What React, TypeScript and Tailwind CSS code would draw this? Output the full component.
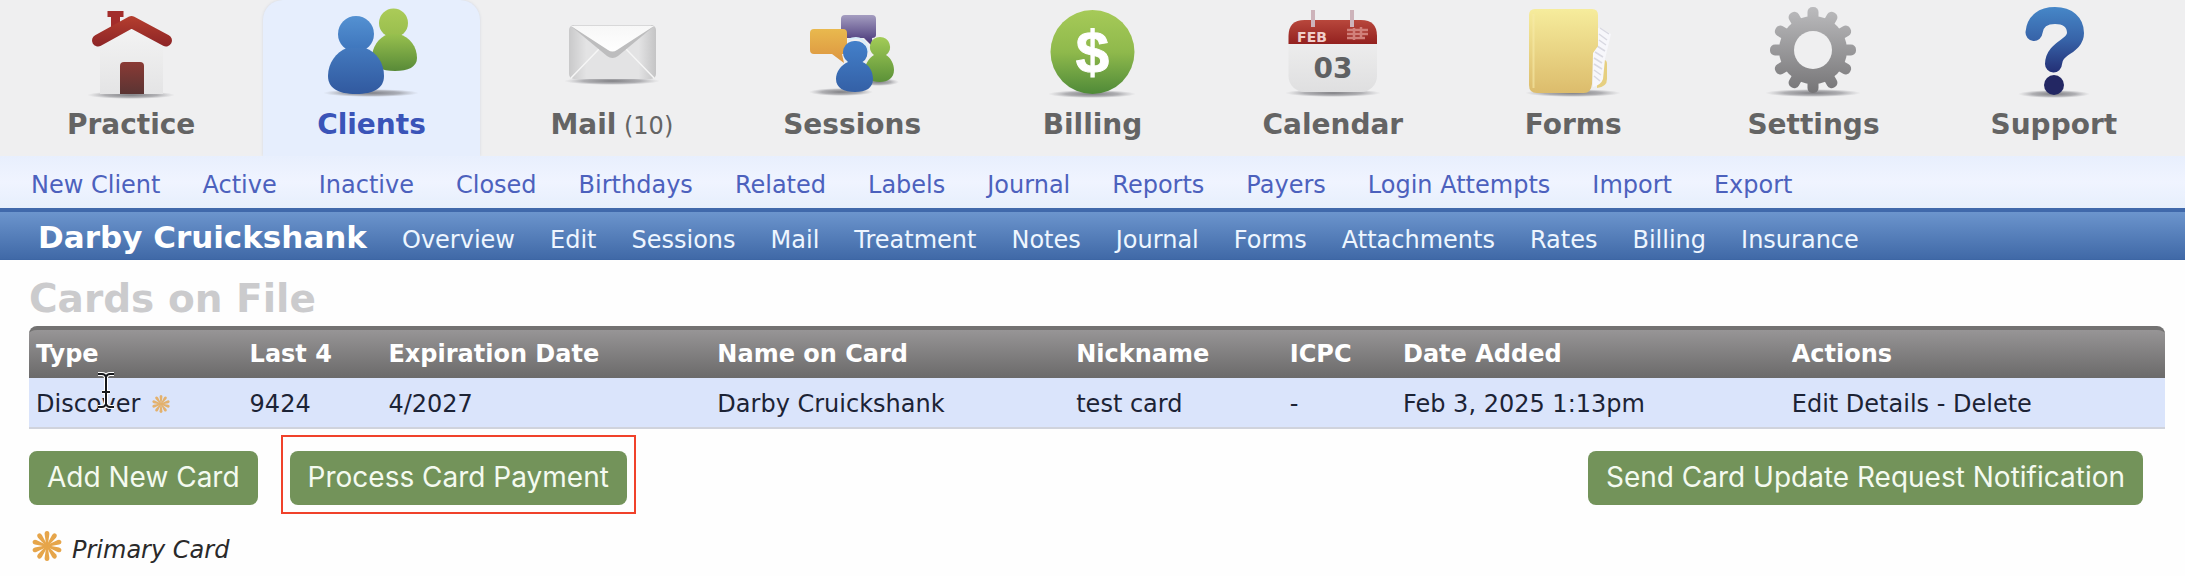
import type { ReactNode } from 'react'

const mainTabs = [
  { label: 'Practice', icon: <PracticeIcon /> },
  { label: 'Clients', icon: <ClientsIcon />, active: true },
  { label: 'Mail', icon: <MailIcon />, count: 10 },
  { label: 'Sessions', icon: <SessionsIcon /> },
  { label: 'Billing', icon: <BillingIcon /> },
  { label: 'Calendar', icon: <CalendarIcon /> },
  { label: 'Forms', icon: <FormsIcon /> },
  { label: 'Settings', icon: <SettingsIcon /> },
  { label: 'Support', icon: <SupportIcon /> },
]

const clientLinks = [
  'New Client',
  'Active',
  'Inactive',
  'Closed',
  'Birthdays',
  'Related',
  'Labels',
  'Journal',
  'Reports',
  'Payers',
  'Login Attempts',
  'Import',
  'Export',
]

const recordLinks = [
  'Overview',
  'Edit',
  'Sessions',
  'Mail',
  'Treatment',
  'Notes',
  'Journal',
  'Forms',
  'Attachments',
  'Rates',
  'Billing',
  'Insurance',
]

const columns = [
  { label: 'Type', width: 'w-[10%]' },
  { label: 'Last 4', width: 'w-[6.5%]' },
  { label: 'Expiration Date', width: 'w-[15.4%]' },
  { label: 'Name on Card', width: 'w-[16.8%]' },
  { label: 'Nickname', width: 'w-[10%]' },
  { label: 'ICPC', width: 'w-[5.3%]' },
  { label: 'Date Added', width: 'w-[18.2%]' },
  { label: 'Actions', width: '' },
]

const cards = [
  {
    type: 'Discover',
    primary: true,
    last4: '9424',
    expires: '4/2027',
    name: 'Darby Cruickshank',
    nickname: 'test card',
    icpc: '-',
    added: 'Feb 3, 2025 1:13pm',
  },
]

function Gradient({ id, from, to }: { id: string; from: string; to: string }) {
  return (
    <linearGradient id={id} x1="0" y1="0" x2="0" y2="1">
      <stop offset="0" stopColor={from} />
      <stop offset="1" stopColor={to} />
    </linearGradient>
  )
}

function TabIcon({ children }: { children: ReactNode }) {
  return (
    <svg viewBox="0 0 100 100" className="size-[100px]" aria-hidden="true">
      {children}
    </svg>
  )
}

function Shadow({ id, cx = 50, cy = 94, rx = 48 }: { id: string; cx?: number; cy?: number; rx?: number }) {
  return (
    <>
      <radialGradient id={id}>
        <stop offset="0" stopColor="#6b6b70" stopOpacity="0.85" />
        <stop offset="0.6" stopColor="#85858a" stopOpacity="0.6" />
        <stop offset="1" stopColor="#a0a0a5" stopOpacity="0" />
      </radialGradient>
      <ellipse cx={cx} cy={cy} rx={rx} ry="4" fill={`url(#${id})`} />
    </>
  )
}

function PracticeIcon() {
  return (
    <TabIcon>
      <Gradient id="wall" from="#f4f4f4" to="#e4e4e5" />
      <Gradient id="door" from="#8a3a35" to="#5a3433" />
      <linearGradient id="roof" gradientUnits="userSpaceOnUse" x1="0" y1="14" x2="0" y2="47">
        <stop offset="0" stopColor="#b8402f" />
        <stop offset="1" stopColor="#8c2426" />
      </linearGradient>
      <Shadow id="practice-shadow" cy={95} rx={44} />
      <path d="M19 40 51 23 82 40V94H19z" fill="url(#wall)" />
      <path d="M39 94V66q0-4 4-4h16q4 0 4 4v28z" fill="url(#door)" />
      <path d="M26.500 11h16v6H39v14h-9V17h-3.500z" fill="#a32d2b" />
      <path d="M17 40.500 50.500 22 85 40.500" fill="none" stroke="url(#roof)" strokeWidth="12" strokeLinecap="round" strokeLinejoin="round" />
    </TabIcon>
  )
}

function ClientsIcon() {
  return (
    <TabIcon>
      <Gradient id="client-blue-head" from="#5491d2" to="#3d74bb" />
      <Gradient id="client-blue-body" from="#4379be" to="#31599f" />
      <Gradient id="client-green-head" from="#abcb58" to="#98bd4d" />
      <Gradient id="client-green-body" from="#98c04e" to="#588a38" />
      <Shadow id="clients-shadow" cy={93} />
      <circle cx="72.500" cy="23" r="14.500" fill="url(#client-green-head)" />
      <path d="M67 34h11c11 3 18 13 18 24 0 9-9 13-22 13S51 67 51 58c0-11 6-20 16-24z" fill="url(#client-green-body)" />
      <circle cx="35" cy="34" r="18" fill="url(#client-blue-head)" />
      <path d="M26 48h18c12 4 19 15 19 28 0 12-10 18-28 18S7 88 7 76c0-13 8-24 19-28z" fill="url(#client-blue-body)" />
    </TabIcon>
  )
}

function MailIcon() {
  return (
    <TabIcon>
      <linearGradient id="envelope">
        <stop offset="0" stopColor="#c9c9ca" />
        <stop offset="0.2" stopColor="#e3e3e4" />
        <stop offset="0.8" stopColor="#e3e3e4" />
        <stop offset="1" stopColor="#c4c4c5" />
      </linearGradient>
      <Gradient id="flap" from="#f7f7f7" to="#ffffff" />
      <Shadow id="mail-shadow" cy={81} />
      <rect x="7" y="25" width="87" height="54" rx="5" fill="url(#envelope)" />
      <path d="M9 78 37 49M92 78 64 49" stroke="#f6f6f6" strokeWidth="1.500" />
      <path d="M10 27 45 56q5.500 4 11 0L91 27z" fill="#bdbdbe" />
      <path d="M9 26h83L55 50q-4.500 3-9 0z" fill="url(#flap)" />
      <path d="M12 25.500h77" stroke="#d8d8d9" />
    </TabIcon>
  )
}

function SessionsIcon() {
  return (
    <TabIcon>
      <Gradient id="bubble-purple" from="#a49dc0" to="#3c2a70" />
      <Gradient id="bubble-orange" from="#e9b94e" to="#dc9440" />
      <Gradient id="session-blue" from="#4380ca" to="#3460a6" />
      <Gradient id="session-green" from="#a3cc57" to="#5b9138" />
      <Shadow id="sessions-shadow" cx={39} cy={92} rx={32} />
      <Shadow id="sessions-shadow-back" cx={76} cy={82} rx={21} />
      <path d="M43 15h27q4 0 4 4v16q0 3-4 3l1 9-9-9H43q-4 0-4-3V19q0-4 4-4z" fill="url(#bubble-purple)" />
      <path d="M78 37a10 10 0 0 1 6 18c5 3 8 9 8 15 0 8-6 12-14 12-10 0-15-4-15-12 0-6 4-12 9-15a10 10 0 0 1 6-18z" fill="url(#session-green)" />
      <path d="M46 40c11-5 19 0 20 12" fill="none" stroke="#d8eefa" strokeWidth="2" />
      <path d="M12 29h29q4 0 4 4v17q0 4-4 4h-1l2 9-12-9H12q-4 0-4-4V33q0-4 4-4z" fill="url(#bubble-orange)" />
      <path d="M53.500 41a11.500 11.500 0 0 1 7 21c7 3 10.500 10 10.500 17 0 9-7 13-18 13s-19-4-19-13c0-7 5-14 12-17a11.500 11.500 0 0 1 7.500-21z" fill="url(#session-blue)" />
    </TabIcon>
  )
}

function BillingIcon() {
  return (
    <TabIcon>
      <linearGradient id="coin" x1="0" y1="0" x2="0" y2="1">
        <stop offset="0" stopColor="#a6ca58" />
        <stop offset="0.5" stopColor="#8fb94c" />
        <stop offset="1" stopColor="#4f8a38" />
      </linearGradient>
      <Shadow id="billing-shadow" rx={44} />
      <circle cx="50.500" cy="52" r="42" fill="url(#coin)" />
      <text x="50.500" y="73" textAnchor="middle" className="fill-white stroke-white stroke-1 font-['Liberation_Sans'] text-[60px] font-bold">
        $
      </text>
    </TabIcon>
  )
}

function CalendarIcon() {
  return (
    <TabIcon>
      <Gradient id="calendar-page" from="#f3f3f3" to="#dfdfe0" />
      <Gradient id="calendar-top" from="#b8473c" to="#93211f" />
      <Shadow id="calendar-shadow" cy={93} />
      <rect x="5.500" y="20" width="88.500" height="72" rx="16" fill="url(#calendar-page)" />
      <path d="M5.500 44v-8q0-16 16-16H78q16 0 16 16v8z" fill="url(#calendar-top)" />
      <path d="M30 10v17M69 10v17" stroke="#cdb3ba" strokeWidth="4" />
      <path d="M64 30h21M64 34h21M64 38h18M71 28v12M78 27v12" stroke="#d1807a" strokeWidth="2.500" />
      <text x="29" y="42" textAnchor="middle" className="fill-[#f0cfcb] font-['DejaVu_Sans'] text-[14px] font-bold">
        FEB
      </text>
      <text x="50" y="78" textAnchor="middle" className="fill-[#5f6163] font-['DejaVu_Sans'] text-[28px] font-bold">
        03
      </text>
    </TabIcon>
  )
}

function FormsIcon() {
  return (
    <TabIcon>
      <Gradient id="folder" from="#f6ec9c" to="#dcbc6c" />
      <Shadow id="forms-shadow" cy={93} />
      <path d="M74 60h7q3 0 3 4v15q0 8-10 9z" fill="#e6cf80" />
      <path d="M70 28h8l10 6-6 25-2 20q-2 6-10 8z" fill="#f7f7fb" />
      <path d="m77 28 9 6M76 34l8 6M76 40l7 5M74 46l8 5M72 52l8 5M71 58l8 5M71 64l8 5M71 70l7 5M71 76l6 5" stroke="#d9d9e2" strokeWidth="1.500" />
      <path d="M12 9h57q6 0 6 6v31l-5 7-1 31q-1 9-8 9H14q-8 0-8-8V15q0-6 6-6z" fill="url(#folder)" />
      <path d="M10.500 14v74" stroke="#f7eba9" strokeWidth="2" opacity="0.6" />
    </TabIcon>
  )
}

function SettingsIcon() {
  const teeth = Array.from({ length: 12 }, (_, i) => i * 30)
  return (
    <TabIcon>
      <linearGradient id="gear" x1="0" y1="0" x2="0" y2="1">
        <stop offset="0" stopColor="#bdbdbf" />
        <stop offset="1" stopColor="#747375" />
      </linearGradient>
      <mask id="gear-shape">
        <circle cx="50" cy="50" r="34" fill="white" />
        {teeth.map((angle) => (
          <rect key={angle} x="44.500" y="7" width="11" height="20" rx="5" fill="white" transform={`rotate(${angle} 50 50)`} />
        ))}
        <circle cx="50" cy="50" r="19" fill="black" />
      </mask>
      <Shadow id="settings-shadow" cy={93} />
      <rect x="5" y="5" width="90" height="90" fill="url(#gear)" mask="url(#gear-shape)" />
    </TabIcon>
  )
}

function SupportIcon() {
  return (
    <TabIcon>
      <linearGradient id="question" gradientUnits="userSpaceOnUse" x1="0" y1="7" x2="0" y2="73">
        <stop offset="0" stopColor="#4687c8" />
        <stop offset="0.5" stopColor="#3763a8" />
        <stop offset="1" stopColor="#232e74" />
      </linearGradient>
      <Shadow id="support-shadow" rx={36} />
      <path d="M30 32.500C31 21 39 15.500 51 15.500c13 0 20.500 7 20.500 17.500C71.500 47 50 47 49.500 64" fill="none" stroke="url(#question)" strokeWidth="17" strokeLinecap="round" />
      <circle cx="50" cy="85" r="10" fill="#232763" />
    </TabIcon>
  )
}

function PrimaryStar({ className }: { className: string }) {
  const petals = Array.from({ length: 10 }, (_, i) => i * 36)
  return (
    <svg viewBox="0 0 30 30" className={className} aria-hidden="true">
      {petals.map((angle) => (
        <path key={angle} d="M14.300 15 12.600 3Q12.600 0 15 0t2.400 3L15.700 15z" fill="#e6a54a" transform={`rotate(${angle} 15 15)`} />
      ))}
    </svg>
  )
}

function TextCursor() {
  const beam = 'M2 2h4q3 0 4 3 1-3 4-3h4M10 5v28M2 35h4q3 0 4-3 1 3 4 3h4M6 20h8'
  return (
    <svg viewBox="0 0 20 37" className="absolute -top-4 left-[60px] h-[37px] w-5" aria-hidden="true">
      <path d={beam} fill="none" stroke="white" strokeWidth="4" />
      <path d={beam} fill="none" stroke="#16181c" strokeWidth="2" />
    </svg>
  )
}

function GreenButton({ children }: { children: ReactNode }) {
  return (
    <button type="button" className="h-[54px] rounded-lg bg-[#73935a] px-[18px] font-[Inter,sans-serif] text-[28px] text-[#f4faf0]">
      {children}
    </button>
  )
}

export default function App() {
  return (
    <div className="min-h-screen bg-[#fefefe] font-['DejaVu_Sans',Verdana,sans-serif] text-2xl text-[#1c2335]">
      <nav aria-label="Main" className="grid grid-cols-9 bg-[#efeff0] px-[11px]">
        {mainTabs.map((tab) => (
          <a
            key={tab.label}
            href="#"
            className={`mx-3 flex h-[156px] flex-col items-center gap-[7px] rounded-t-[20px] text-[28px] leading-9 font-bold whitespace-nowrap ${
              tab.active
                ? 'bg-[#e6eefd] text-[#3a54b8] shadow-[0_0_3px_#d3d6df]'
                : 'text-[#646464]'
            }`}
          >
            {tab.icon}
            <span>
              {tab.label}
              {tab.count && <span className="text-2xl font-normal"> ({tab.count})</span>}
            </span>
          </a>
        ))}
      </nav>

      <nav aria-label="Clients" className="relative flex h-[52px] items-center gap-[42px] bg-linear-to-b from-[#e8effd] via-[#f0f4ff] to-[#e6effc] px-[31px] pt-1.5 whitespace-nowrap text-[#4c61bd]">
        {clientLinks.map((link) => (
          <a key={link} href="#">
            {link}
          </a>
        ))}
      </nav>

      <nav aria-label="Client record" className="flex h-[52px] items-baseline gap-[35px] border-t-4 border-b border-t-[#4069ab] border-b-[#3d66a4] bg-linear-to-b from-[#6c95cd] to-[#4069a7] px-[38px] pt-[7px] whitespace-nowrap text-[#eef6ff]">
        <span className="text-[31px] leading-9 font-bold text-white">Darby Cruickshank</span>
        {recordLinks.map((link) => (
          <a key={link} href="#">
            {link}
          </a>
        ))}
      </nav>

      <main className="pt-[15px] pr-5 pl-[29px]">
        <h1 className="mb-[3px] text-[39px] leading-[48px] font-bold text-[#cbcbcd]">Cards on File</h1>

        <table className="w-full table-fixed border-separate border-spacing-0 text-left whitespace-nowrap">
          <thead>
            <tr className="text-white">
              {columns.map((column) => (
                <th
                  key={column.label}
                  scope="col"
                  className={`h-[52px] border-t-4 border-[#737272] bg-linear-to-b from-[#979596] to-[#6b6a6a] pl-[7px] font-bold first:rounded-tl-lg last:rounded-tr-lg ${column.width}`}
                >
                  {column.label}
                </th>
              ))}
            </tr>
          </thead>
          <tbody>
            {cards.map((card) => (
              <tr key={card.last4} className="*:h-[51px] *:border-b-2 *:border-[#d0d3dc] *:bg-[#dae4fb] *:pt-[3px] *:pl-[7px]">
                <td>
                  <div className="relative flex items-center gap-3">
                    {card.type}
                    {card.primary && <PrimaryStar className="size-[18px] opacity-80" />}
                    <TextCursor />
                  </div>
                </td>
                <td>{card.last4}</td>
                <td>{card.expires}</td>
                <td>{card.name}</td>
                <td>{card.nickname}</td>
                <td>{card.icpc}</td>
                <td>{card.added}</td>
                <td>
                  <a href="#">Edit Details</a> - <a href="#">Delete</a>
                </td>
              </tr>
            ))}
          </tbody>
        </table>

        <div className="mt-1.5 flex items-baseline gap-[23px] pr-[22px]">
          <GreenButton>Add New Card</GreenButton>
          <div className="flex border-2 border-[#f0412a] px-[7px] pt-3.5 pb-[7px]">
            <GreenButton>Process Card Payment</GreenButton>
          </div>
          <div className="ml-auto">
            <GreenButton>Send Card Update Request Notification</GreenButton>
          </div>
        </div>

        <p className="mt-[17px] flex items-end gap-2.5 pl-[3px] leading-9 text-[#2a2a2a] italic">
          <PrimaryStar className="mb-[7px] size-[30px]" />
          Primary Card
        </p>
      </main>
    </div>
  )
}
